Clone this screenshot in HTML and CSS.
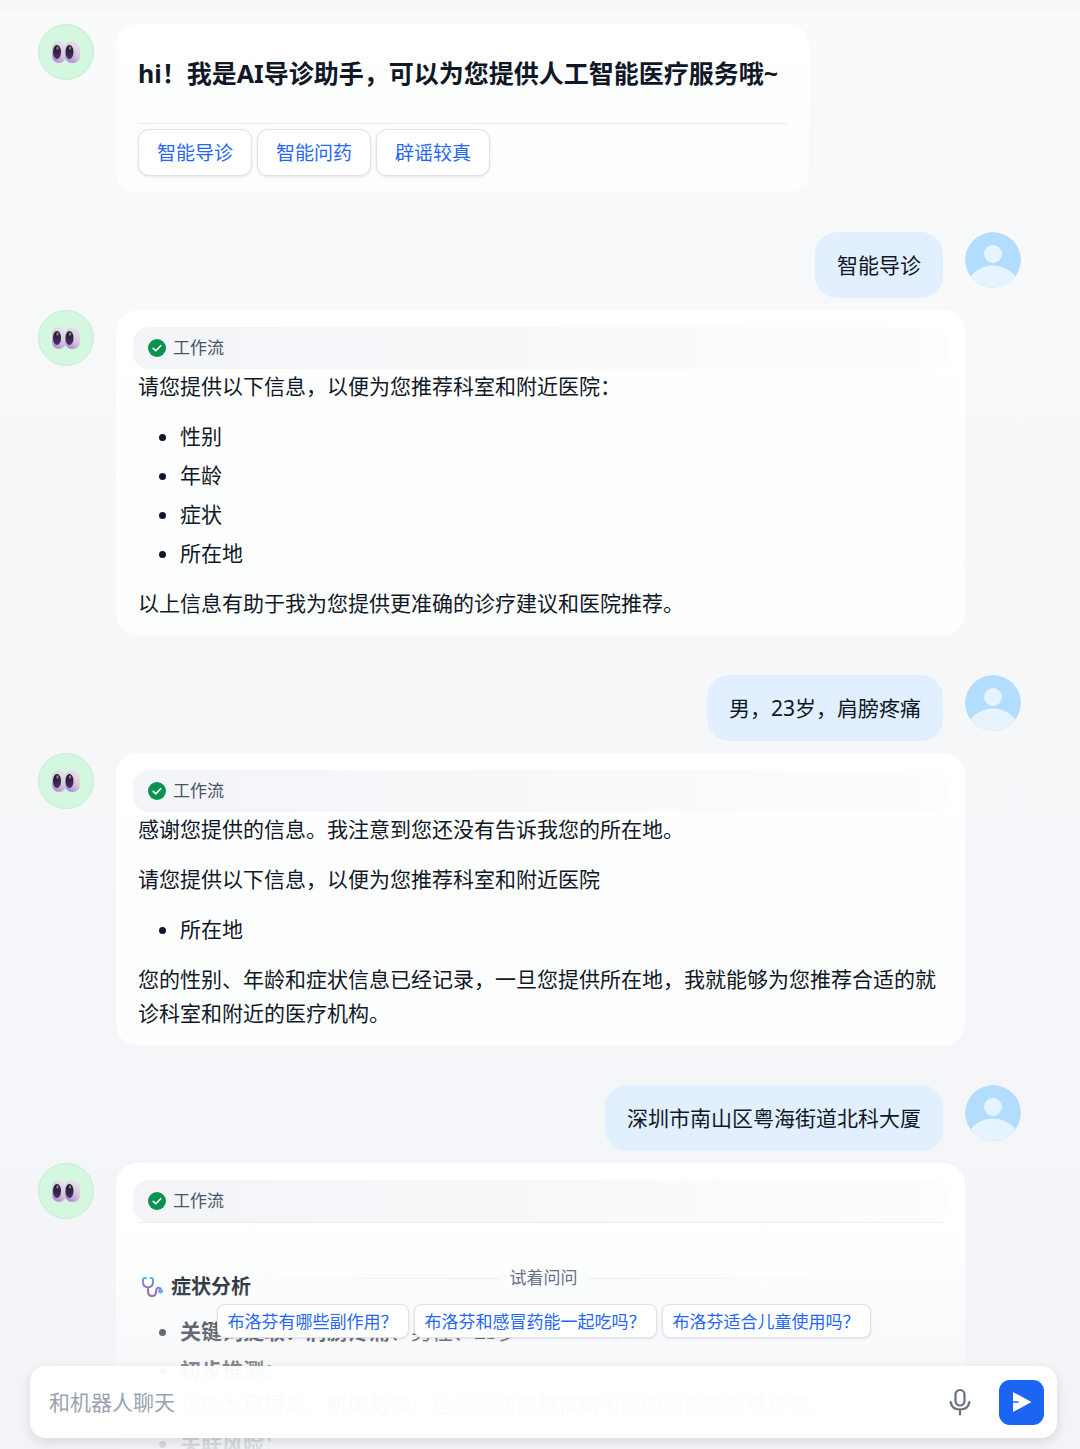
FILE: index.html
```
<!DOCTYPE html>
<html lang="zh-CN">

<head>
    <meta charset="UTF-8">
    <meta name="viewport" content="width=device-width, initial-scale=1.0">
    <title>AI导诊助手</title>
    <link rel="stylesheet" href="styles.css">
</head>

<body>
    <!-- 图标 -->
    <svg class="sprite" aria-hidden="true">
        <defs>
            <linearGradient id="ball" x1="0.8" y1="0" x2="0.3" y2="1">
                <stop offset="0" stop-color="#ebe6ee"/>
                <stop offset="0.55" stop-color="#d3c8da"/>
                <stop offset="1" stop-color="#b586d4"/>
            </linearGradient>
            <linearGradient id="pupil" x1="0" y1="0" x2="0" y2="1">
                <stop offset="0" stop-color="#1e1724"/>
                <stop offset="1" stop-color="#4b2f68"/>
            </linearGradient>
            <linearGradient id="tube" x1="0" y1="0" x2="0" y2="1">
                <stop offset="0" stop-color="#2fb4f0"/>
                <stop offset="0.4" stop-color="#7a5fb5"/>
                <stop offset="1" stop-color="#7c4f9f"/>
            </linearGradient>
        </defs>
        <symbol id="eyes" viewBox="0 0 28 22">
            <rect x="0" y="0" width="14" height="22" rx="7" fill="url(#ball)"/>
            <rect x="13" y="0" width="15" height="22" rx="7" fill="url(#ball)"/>
            <ellipse cx="5" cy="11" rx="4" ry="7" fill="url(#pupil)"/>
            <ellipse cx="17.500" cy="11" rx="4" ry="7" fill="url(#pupil)"/>
            <ellipse cx="5.500" cy="7" rx="1.200" ry="1.700" fill="#8a8194"/>
            <ellipse cx="18" cy="7" rx="1.200" ry="1.700" fill="#8a8194"/>
        </symbol>
        <symbol id="user" viewBox="0 0 56 56">
            <circle cx="28" cy="28" r="28" fill="#b2ddff"/>
            <circle cx="28" cy="22" r="9" fill="#e6f4ff"/>
            <path d="M5.500 44.500C11 37.500 19 33.500 28 33.500S45 37.500 50.500 44.500A28 28 0 0 1 5.500 44.500Z" fill="#e6f4ff"/>
        </symbol>
        <symbol id="check" viewBox="0 0 18 18">
            <circle cx="9" cy="9" r="9" fill="#099250"/>
            <path d="M5.200 9.300L7.900 11.800L12.700 6.700" fill="none" stroke="#fff" stroke-width="1.600" stroke-linecap="round" stroke-linejoin="round"/>
        </symbol>
    </svg>

    <div class="app">
        <main class="chat">
            <div class="row">
                <div class="avatar bot"><svg><use href="#eyes"/></svg></div>
                <div class="bubble hello">
                    <h2>hi！我是AI导诊助手，可以为您提供人工智能医疗服务哦~</h2>
                    <div class="options">
                        <button type="button" class="btn">智能导诊</button>
                        <button type="button" class="btn">智能问药</button>
                        <button type="button" class="btn">辟谣较真</button>
                    </div>
                </div>
            </div>

            <div class="row me">
                <div class="bubble">智能导诊</div>
                <div class="avatar"><svg><use href="#user"/></svg></div>
            </div>

            <div class="row">
                <div class="avatar bot"><svg><use href="#eyes"/></svg></div>
                <div class="bubble answer">
                    <div class="flow"><svg><use href="#check"/></svg>工作流</div>
                    <p>请您提供以下信息，以便为您推荐科室和附近医院：</p>
                    <ul>
                        <li>性别</li>
                        <li>年龄</li>
                        <li>症状</li>
                        <li>所在地</li>
                    </ul>
                    <p>以上信息有助于我为您提供更准确的诊疗建议和医院推荐。</p>
                </div>
            </div>

            <div class="row me">
                <div class="bubble">男，23岁，肩膀疼痛</div>
                <div class="avatar"><svg><use href="#user"/></svg></div>
            </div>

            <div class="row">
                <div class="avatar bot"><svg><use href="#eyes"/></svg></div>
                <div class="bubble answer">
                    <div class="flow"><svg><use href="#check"/></svg>工作流</div>
                    <p>感谢您提供的信息。我注意到您还没有告诉我您的所在地。</p>
                    <p>请您提供以下信息，以便为您推荐科室和附近医院</p>
                    <ul>
                        <li>所在地</li>
                    </ul>
                    <p>您的性别、年龄和症状信息已经记录，一旦您提供所在地，我就能够为您推荐合适的就诊科室和附近的医疗机构。</p>
                </div>
            </div>

            <div class="row me">
                <div class="bubble">深圳市南山区粤海街道北科大厦</div>
                <div class="avatar"><svg><use href="#user"/></svg></div>
            </div>

            <div class="row">
                <div class="avatar bot"><svg><use href="#eyes"/></svg></div>
                <div class="bubble answer">
                    <div class="flow"><svg><use href="#check"/></svg>工作流</div>
                    <hr>
                    <h3>
                        <svg viewBox="0 0 22 22">
                            <path d="M5 2H3.500Q2 2 2 4V6Q2 11 7 11.500Q12 11 12 6V4Q12 2 10.500 2H9.500M7 11.500V15Q7 20 11 20T15 15.500T18.500 12Q20 12 20 15" fill="none" stroke="url(#tube)" stroke-width="2" stroke-linecap="round"/>
                            <circle cx="19.500" cy="15" r="2.500" fill="#4b9dfa"/>
                        </svg>
                        症状分析
                    </h3>
                    <ul>
                        <li><b>关键词提取：肩膀疼痛</b>、男性、23岁</li>
                        <li><b>初步推测</b>：<br>可能为<b>肩周炎</b>、<b>肌肉劳损</b>、运动损伤或<b>颈椎病</b>引起的肩部放射性疼痛。</li>
                        <li><b>关联风险</b>：</li>
                    </ul>
                </div>
            </div>
        </main>

        <footer class="bottom">
            <div class="try"><span>试着问问</span></div>
            <div class="asks">
                <button type="button" class="btn small">布洛芬有哪些副作用？</button>
                <button type="button" class="btn small">布洛芬和感冒药能一起吃吗？</button>
                <button type="button" class="btn small">布洛芬适合儿童使用吗？</button>
            </div>
            <form class="inputbox">
                <input type="text" placeholder="和机器人聊天" aria-label="和机器人聊天">
                <button type="button" class="mic" aria-label="语音输入">
                    <svg viewBox="0 0 24 28" fill="none" stroke="#667085" stroke-width="2.200" stroke-linecap="round">
                        <rect x="7.500" y="2" width="9" height="15.500" rx="4.500"/>
                        <path d="M2.500 14C3.500 19 7 21.500 12 21.500S20.500 19 21.500 14M12 21.500V26.500"/>
                    </svg>
                </button>
                <button type="button" class="send" aria-label="发送">
                    <svg viewBox="0 0 20 22"><path d="M1 1L19.500 11L1 21V11.700H6.500V10.300H1Z" fill="#fff"/></svg>
                </button>
            </form>
        </footer>
    </div>
</body>

</html>
```
FILE: styles.css
```
* {
    margin: 0;
    padding: 0;
    box-sizing: border-box;
}

body {
    font-family: "Noto Sans", "Noto Sans CJK SC", sans-serif;
    font-size: 21px;
    line-height: 34px;
    color: #101828;
}

button, input {
    font-family: inherit;
}

svg {
    display: block;
    flex: none;
}

.sprite {
    position: absolute;
    width: 0;
    height: 0;
}

.app {
    position: relative;
    height: 100vh;
    overflow: hidden;
    background: linear-gradient(#f9fafb, #f2f4f7);
    border-top: 13px solid #f7f8fa;
}

.chat {
    height: 100%;
    padding: 11px 59px 0 38px;
    overflow-y: auto;
    scrollbar-width: none;
}

/* 消息 */
.row {
    display: flex;
    align-items: flex-start;
    gap: 22px;
    margin-bottom: 39px;
    padding-right: 56px;
}
.row.me {
    justify-content: flex-end;
    margin-bottom: 12px;
    padding-right: 0;
}

.avatar {
    flex: none;
    display: flex;
    align-items: center;
    justify-content: center;
    width: 56px;
    height: 56px;
    border-radius: 50%;
    overflow: hidden;
}
.avatar svg {
    width: 56px;
    height: 56px;
}
.avatar.bot {
    background: #d3f8df;
    border: 1px solid #c6ecd3;
}
.avatar.bot svg {
    width: 28px;
    height: 22px;
}

.bubble {
    padding: 16px 22px;
    border-radius: 22px;
    background: linear-gradient(#fff, #fcfdfd);
}
.me .bubble {
    background: #e1efff;
}
.answer {
    flex: 1;
    padding-top: 17px;
}

.hello h2 {
    padding: 16px 9px 33px 0;
    font-size: 25px;
    line-height: 34px;
    border-bottom: 1px solid #eaecf0;
}
.options {
    display: flex;
    gap: 5px;
    padding: 5px 0 1px;
}

.btn {
    height: 47px;
    padding: 0 18px 2px;
    font-size: 19px;
    color: #2566f5;
    background: #fff;
    border: 1px solid #e0e2e7;
    border-radius: 11px;
    box-shadow: 0 1px 3px rgba(16, 24, 40, 0.1);
    cursor: pointer;
}

.flow {
    display: flex;
    align-items: center;
    gap: 7px;
    height: 42px;
    margin: 0 -5px;
    padding: 0 15px;
    font-size: 17px;
    color: #475467;
    background: linear-gradient(90deg, #f2f4f7, #fdfdfd);
    border-radius: 16px;
}
.flow svg {
    width: 18px;
    height: 18px;
}

.answer p + p,
.answer p + ul,
.answer ul + p {
    margin-top: 16px;
}
.answer ul {
    padding-left: 42px;
}
.answer li + li {
    margin-top: 5px;
}
.answer hr {
    border: none;
    border-top: 1px solid #eaecf0;
}
.answer h3 {
    display: flex;
    align-items: center;
    gap: 8px;
    padding: 47px 0 10px 3px;
    font-size: 20px;
    line-height: 34px;
}
.answer h3 svg {
    width: 22px;
    height: 22px;
}

/* 底部输入区 */
.bottom {
    position: absolute;
    left: 0;
    right: 0;
    bottom: 0;
    padding: 16px 23px 11px 30px;
    background: linear-gradient(rgba(242, 244, 247, 0), rgba(242, 244, 247, 0.9));
}

.try {
    display: flex;
    align-items: center;
    gap: 12px;
    max-width: 654px;
    margin: 0 auto 14px;
    font-size: 17px;
    line-height: 24px;
    color: #667085;
}
.try::before,
.try::after {
    content: "";
    flex: 1;
    height: 1px;
    background: linear-gradient(90deg, rgba(234, 236, 240, 0), #eaecf0);
}
.try::after {
    background: linear-gradient(90deg, #eaecf0, rgba(234, 236, 240, 0));
}

.asks {
    display: flex;
    flex-wrap: wrap;
    justify-content: center;
    gap: 5px;
    margin-bottom: 28px;
}
.btn.small {
    height: 34px;
    padding: 0 10px 2px;
    font-size: 17px;
    border-radius: 8px;
}

.inputbox {
    display: flex;
    align-items: center;
    padding: 13px 13px 13px 19px;
    background: rgba(255, 255, 255, 0.95);
    border-radius: 16px;
    box-shadow: 0 4px 12px rgba(16, 24, 40, 0.12);
}
.inputbox input {
    flex: 1;
    min-width: 0;
    height: 46px;
    font-size: 21px;
    color: #101828;
    background: none;
    border: none;
    outline: none;
}
.inputbox input::placeholder {
    color: #98a2b3;
}
.mic {
    margin-right: 27px;
    background: none;
    border: none;
    cursor: pointer;
}
.mic svg {
    width: 24px;
    height: 28px;
}
.send {
    display: flex;
    align-items: center;
    justify-content: center;
    width: 45px;
    height: 45px;
    background: #1c64f2;
    border: none;
    border-radius: 11px;
    cursor: pointer;
}
.send svg {
    width: 20px;
    height: 22px;
}
```
